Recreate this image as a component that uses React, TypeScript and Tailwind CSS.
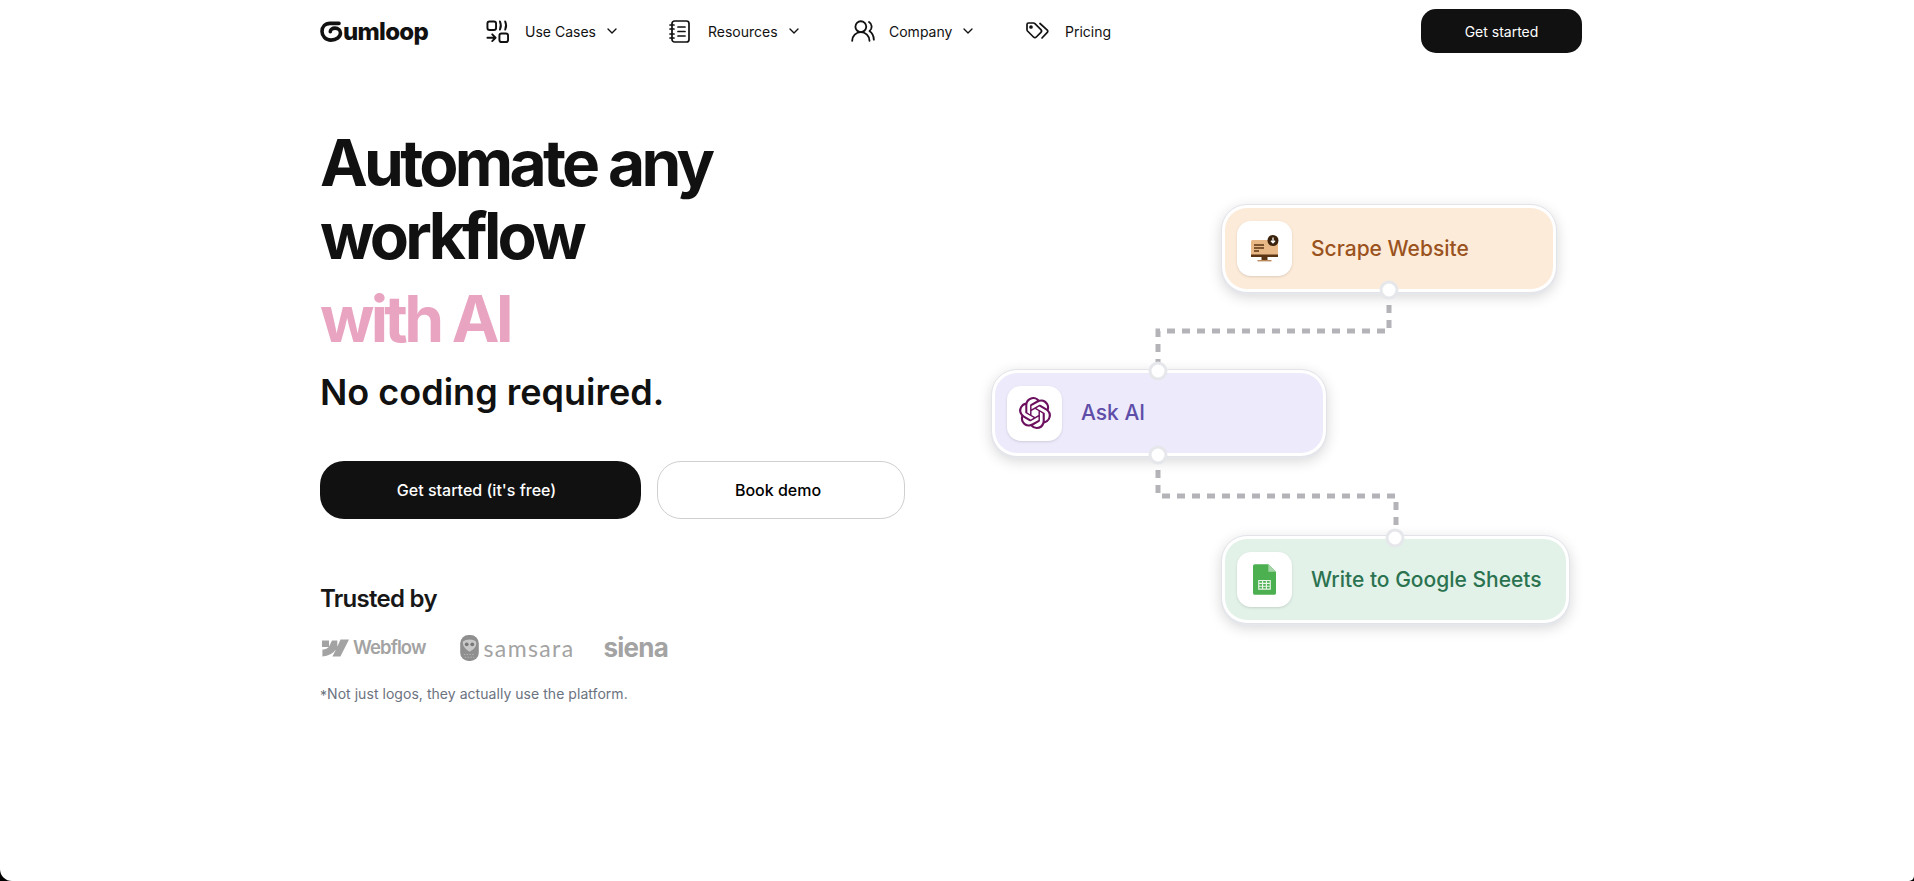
import { ChevronDown, UsersRound } from 'lucide-react';
import { SiOpenai } from 'react-icons/si';

const NAV = [
  { label: 'Use Cases', icon: <UseCasesIcon />, chevron: true, width: 'w-[183px]' },
  { label: 'Resources', icon: <NotebookIcon />, chevron: true, width: 'w-[181px]' },
  { label: 'Company', icon: <UsersRound size={26} strokeWidth={1.7} />, chevron: true, width: 'w-[176px]' },
  { label: 'Pricing', icon: <TagsIcon />, chevron: false, width: 'w-[100px]' },
];

function UseCasesIcon() {
  return (
    <svg width="23" height="23" viewBox="0 0 24 24" fill="none" stroke="currentColor" strokeWidth="2" strokeLinecap="round" strokeLinejoin="round">
      <rect x="1.5" y="1.5" width="9" height="9" rx="2.2" />
      <rect x="14" y="14" width="9" height="9" rx="2.2" />
      <path d="M14.5 1.5c1.2 2.6 1.2 6 0 8.5M20 1.5c1.2 2.6 1.2 6 0 8.5" />
      <path d="M1.5 18.5h8M6.5 15 10 18.5 6.5 22" />
    </svg>
  );
}

function NotebookIcon() {
  return (
    <svg width="21" height="23" viewBox="0 0 21 23" fill="none" stroke="currentColor" strokeWidth="1.7" strokeLinecap="round" strokeLinejoin="round">
      <rect x="3" y="1" width="17" height="21" rx="2.5" />
      <path d="M1 5h4M1 9h4M1 14h4M1 18h4" />
      <path d="M9 7h7M9 11.500h7M9 16h7" />
    </svg>
  );
}

function TagsIcon() {
  return (
    <svg width="23" height="18" viewBox="0 0 23 18" fill="none" stroke="currentColor" strokeWidth="1.7" strokeLinecap="round" strokeLinejoin="round">
      <path d="M1 2.500a1.500 1.500 0 0 1 1.500-1.500h5a2 2 0 0 1 1.400.6l6 6a2 2 0 0 1 0 2.800l-4.600 4.600a2 2 0 0 1-2.800 0l-6-6a2 2 0 0 1-.5-1.400z" />
      <circle cx="5" cy="5" r="1" />
      <path d="M14 1.500l7.300 6.600a1.500 1.500 0 0 1 0 2.200L16 16" />
    </svg>
  );
}

function GumloopMark() {
  return (
    <svg width="23" height="21" viewBox="0 0 23 21" fill="none" stroke="#111" strokeWidth="3.6" strokeLinecap="round">
      <path d="M19 2.400H10C5 2.400 2 6 2 10.500s3.600 8.600 9 8.600 9.500-3.200 9.500-7c0-3-2.400-5-5.500-5-2.700 0-4.700 1.600-4.700 3.600" />
    </svg>
  );
}

function WebflowMark() {
  return (
    <svg width="27" height="18" viewBox="0 0 27 17" fill="#a3a3a3">
      <path d="M27 0 18.400 17h-8l3.600-7c-3 3.900-7.400 6.400-13.600 7v-6.900s4-.2 6.400-2.700H0V1h7v5.800h.2L10 1h5.300v5.700h.2L18.500 0z" />
    </svg>
  );
}

function SamsaraMark() {
  return (
    <svg width="19" height="26" viewBox="0 0 20 28">
      <rect x="0" y="0" width="20" height="28" rx="9" fill="#8f8f8f" />
      <path d="M3 7c3-3 11-3 14 0 1 4-1 8-7 11C5 15 2 11 3 7z" fill="#c9c9c9" />
      <circle cx="7" cy="10" r="2" fill="#777" />
      <circle cx="13" cy="10" r="2" fill="#777" />
      <path d="M4 21h12M5 24h10" stroke="#b5b5b5" strokeWidth="1.2" strokeDasharray="1.5 1.5" />
    </svg>
  );
}

function ScrapeIcon() {
  return (
    <svg width="30" height="30" viewBox="0 0 30 30">
      <rect x="1" y="6" width="27" height="17" rx="1.500" fill="#e8b886" />
      <rect x="1" y="20.500" width="27" height="2.500" fill="#5a3413" />
      <path d="M4 11h10M4 14h10M4 17h5" stroke="#5a3413" strokeWidth="1.400" />
      <rect x="11.500" y="23" width="6" height="3" fill="#5a3413" />
      <rect x="7.500" y="26" width="14" height="1.400" fill="#b98a5c" />
      <circle cx="23" cy="6.500" r="5.500" fill="#3a220d" />
      <path d="M23 3.500v5M21 6.800l2 2 2-2" stroke="#fff" strokeWidth="1.300" fill="none" />
    </svg>
  );
}

function SheetsIcon() {
  return (
    <svg width="23" height="31" viewBox="0 0 24 32">
      <path d="M2 0h14l8 8v22a2 2 0 0 1-2 2H2a2 2 0 0 1-2-2V2a2 2 0 0 1 2-2z" fill="#4caf50" />
      <path d="M16 0l8 8h-8z" fill="#a5d6a7" />
      <path d="M6 17h12v9H6z M6 20h12 M6 23h12 M10 17v9 M14 17v9" stroke="#e8f5e9" strokeWidth="1.200" fill="none" />
    </svg>
  );
}

function Dot({ className }: { className: string }) {
  return <span className={`absolute w-[19px] h-[19px] rounded-full bg-white border-[3px] border-[#e5e7eb] -translate-x-1/2 -translate-y-1/2 ${className}`} />;
}

function FlowNode({ className, bg, color, icon, label }: { className: string; bg: string; color: string; icon: React.ReactNode; label: string }) {
  return (
    <div className={`absolute rounded-[26px] bg-white border border-[#e2e4ea] p-[3px] shadow-[0_2px_0_#e5e7eb,0_4px_14px_rgba(0,0,0,0.16)] ${className}`}>
      <div className={`h-full rounded-[22px] flex items-center pl-[12px] gap-[19px] ${bg}`}>
        <div className="w-[55px] h-[55px] rounded-[14px] bg-white flex items-center justify-center shadow-sm">{icon}</div>
        <span className={`text-[21px] font-medium whitespace-nowrap ${color}`}>{label}</span>
      </div>
    </div>
  );
}

export default function App() {
  return (
    <div className="w-full h-[881px] bg-black overflow-hidden font-['Inter',sans-serif]">
      <div className="h-full bg-white rounded-bl-[12px] rounded-br-[5px] flex flex-col pr-[12px]">
        <header className="w-[1262px] mx-auto h-[62px] flex items-center shrink-0">
          <div className="flex items-center w-[166px]" aria-label="Gumloop">
            <GumloopMark />
            <span className="text-[24px] font-extrabold tracking-[-0.03em] text-[#111] leading-none mt-[2px]">umloop</span>
          </div>
          <nav className="flex items-center flex-1 text-[#111] text-[14px]">
            {NAV.map((n) => (
              <div key={n.label} className={`flex items-center ${n.width}`}>
                <span className="w-[26px] flex items-center justify-start">{n.icon}</span>
                <span className="ml-[13px]">{n.label}</span>
                {n.chevron && <ChevronDown size={16} strokeWidth={2} className="ml-[8px]" />}
              </div>
            ))}
          </nav>
          <button type="button" className="w-[161px] h-[44px] rounded-[15px] bg-[#111] text-white text-[14px]">Get started</button>
        </header>

        <main className="w-[1262px] mx-auto flex-1 relative">
          <h1 className="mt-[64px] text-[64px] leading-[73px] font-[650] tracking-[-0.058em] text-[#111] w-[500px]">
            Automate any workflow
          </h1>
          <p className="mt-[10px] text-[64px] leading-[73px] font-[650] tracking-[-0.058em] text-[#e8a4c0]">with AI</p>
          <p className="mt-[15px] text-[36px] leading-[44px] font-semibold text-[#111]">No coding required.</p>
          <div className="mt-[47px] flex gap-[16px]">
            <button type="button" className="w-[321px] h-[58px] pr-[8px] rounded-[24px] bg-[#111] text-white text-[16px] font-medium">Get started (it's free)</button>
            <button type="button" className="w-[248px] h-[58px] pr-[6px] rounded-[24px] bg-white border border-[#cfcfcf] text-black text-[16px] font-medium">Book demo</button>
          </div>
          <h2 className="mt-[64px] text-[24px] leading-[32px] font-semibold tracking-[-0.03em] text-[#171717]">Trusted by</h2>
          <div className="mt-[17px] flex items-center h-[32px] pl-[2px]">
            <WebflowMark />
            <span className="ml-[4px] text-[18.500px] font-semibold tracking-[-0.05em] text-[#a3a3a3]">Webflow</span>
            <span className="ml-[34px] flex"><SamsaraMark /></span>
            <span className="ml-[5px] text-[23px] font-['Lato',sans-serif] tracking-[0.06em] text-[#a3a3a3]">samsara</span>
            <span className="ml-[29px] text-[26px] font-bold tracking-[-0.03em] text-[#a3a3a3] leading-none">siena</span>
          </div>
          <p className="mt-[19px] text-[14px] tracking-[0.003em] text-[#6b7280]"><span className="relative top-[2px]">*</span>Not just logos, they actually use the platform.</p>

          <svg className="absolute left-0 top-0 pointer-events-none" width="1262" height="819" fill="none" stroke="#b3b3b8" strokeWidth="5" strokeDasharray="8 7">
            <path d="M1069 243v26H838v40" />
            <path d="M838 393v41h238v41" />
          </svg>
          <FlowNode className="left-[901px] top-[142px] w-[336px] h-[89px]" bg="bg-[#fdebd9]" color="text-[#9a5320]" icon={<ScrapeIcon />} label="Scrape Website" />
          <Dot className="left-[1069px] top-[228px]" />
          <FlowNode className="left-[671px] top-[307px] w-[336px] h-[88px]" bg="bg-[#edeafb]" color="text-[#5f4ea8]" icon={<SiOpenai size={32} color="#6b0f5e" />} label="Ask AI" />
          <Dot className="left-[838px] top-[309px]" />
          <Dot className="left-[838px] top-[393px]" />
          <FlowNode className="left-[901px] top-[473px] w-[349px] h-[89px]" bg="bg-[#e2f2e9]" color="text-[#2b7350]" icon={<SheetsIcon />} label="Write to Google Sheets" />
          <Dot className="left-[1075px] top-[476px]" />
        </main>
      </div>
    </div>
  );
}
